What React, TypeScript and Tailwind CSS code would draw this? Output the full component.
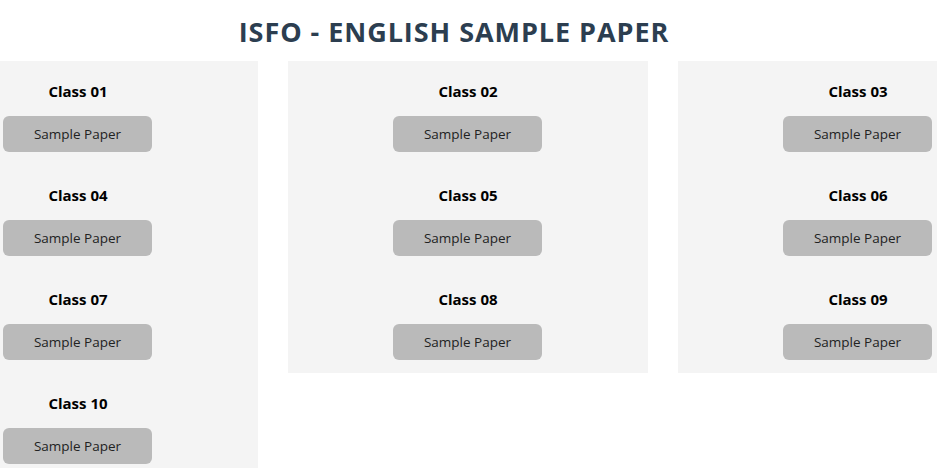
const columns = [
  ['01', '04', '07', '10'],
  ['02', '05', '08'],
  ['03', '06', '09'],
]

function ClassItem({ num }: { num: string }) {
  return (
    <div className="flex flex-col items-center pt-[18px] pb-[13px]">
      <h3 className="text-[15px] leading-[24px] font-bold text-black">Class {num}</h3>
      <button className="mt-[13px] mr-[1px] w-[149px] h-[36px] rounded-[6px] bg-[#bababa] text-[13.5px] text-[#222]">
        Sample Paper
      </button>
    </div>
  )
}

export default function App() {
  return (
    <div className="h-screen overflow-hidden bg-white" style={{ fontFamily: '"Open Sans", "DejaVu Sans", sans-serif' }}>
      <div className="h-[61px] flex items-center justify-center pt-[3px] pr-[29px]">
        <h1 className="text-[27px] font-bold text-[#2c3e50] tracking-[0.95px]">
          ISFO - ENGLISH SAMPLE PAPER
        </h1>
      </div>

      <div className="flex justify-center items-start gap-[30px] pr-[1px]">
        {columns.map((col, i) => (
          <div key={i} className="w-[360px] shrink-0 bg-[#f4f4f4]">
            {col.map(n => <ClassItem key={n} num={n} />)}
          </div>
        ))}
      </div>
    </div>
  )
}
